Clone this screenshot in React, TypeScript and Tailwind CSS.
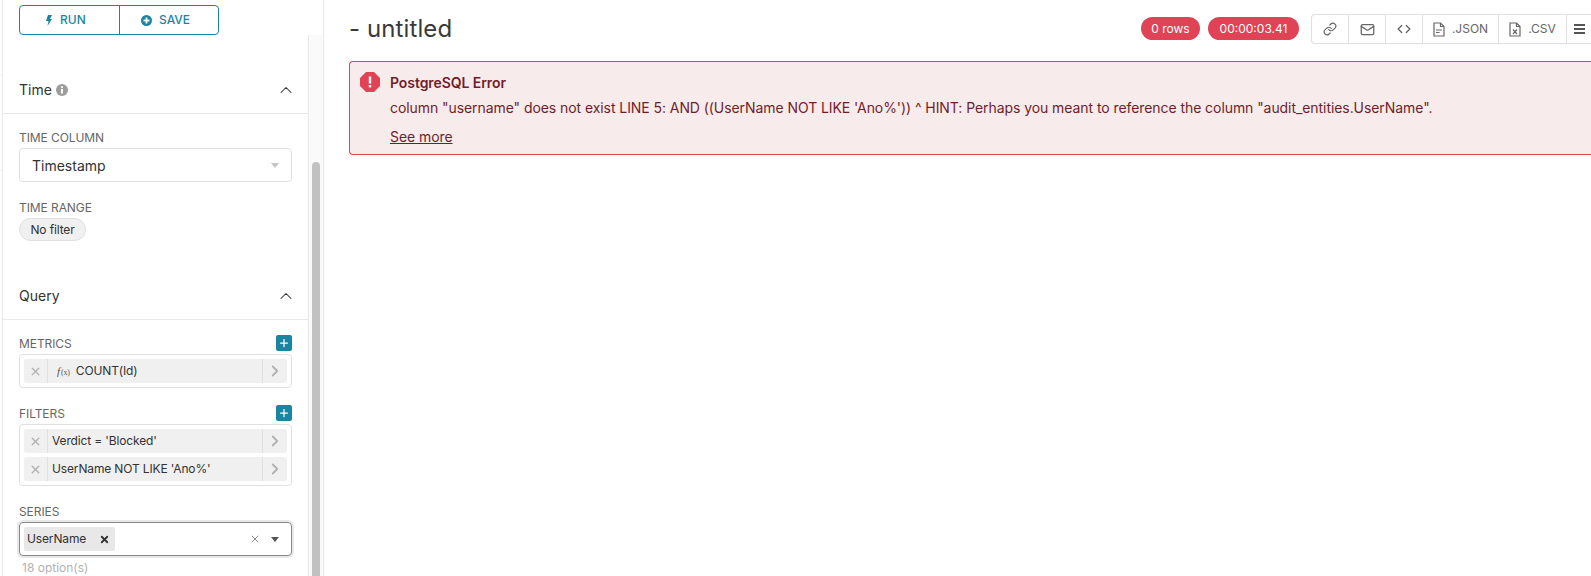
import type { ReactNode } from "react";
import { ChevronUp, ChevronRight, X, Plus, Link, Mail, Code } from "lucide-react";

function InfoDot() {
  return (
    <svg width="12" height="12" viewBox="0 0 12 12">
      <circle cx="6" cy="6" r="6" fill="#9c9c9c" />
      <rect x="5" y="5" width="2" height="4.5" fill="#fff" />
      <rect x="5" y="2.3" width="2" height="1.8" fill="#fff" />
    </svg>
  );
}

function Section({ title, info, children }: { title: string; info?: boolean; children: ReactNode }) {
  return (
    <div>
      <div className="h-[48px] flex items-center justify-between pl-[16px] pr-[12px] border-b border-[#e8e8e8] text-[14px] text-[#323232]">
        <span className="flex items-center gap-[4px]">
          {title}
          {info && <InfoDot />}
        </span>
        <ChevronUp size={20} strokeWidth={1.25} className="text-[#323232]" />
      </div>
      {children}
    </div>
  );
}

function Label({ children }: { children: ReactNode }) {
  return <div className="text-[12px] leading-[16px] text-[#666] tracking-[-0.08px]">{children}</div>;
}

function Pill({ children }: { children: ReactNode }) {
  return (
    <div className="h-[24px] bg-[#f0f0f0] rounded-[2px] flex items-center text-[12px] text-[#323232] tracking-[-0.14px]">
      <div className="w-[24px] h-full flex items-center justify-center border-r border-[#e0e0e0]">
        <X size={13} strokeWidth={2.5} className="text-[#b2b2b2]" />
      </div>
      <div className="flex-1 flex items-center pl-[4px] whitespace-nowrap">{children}</div>
      <div className="w-[25px] h-full flex items-center justify-center border-l border-[#e0e0e0]">
        <ChevronRight size={18} strokeWidth={2.5} className="text-[#b2b2b2]" />
      </div>
    </div>
  );
}

function AddBtn() {
  return (
    <div className="w-[16px] h-[16px] rounded-[2px] bg-[#1a85a0] flex items-center justify-center">
      <Plus size={12} strokeWidth={2.5} className="text-white" />
    </div>
  );
}

function ToolBtn({ children, className = "" }: { children: ReactNode; className?: string }) {
  return (
    <div className={"h-full flex items-center justify-center border-r border-[#e0e0e0] text-[12px] text-[#666] " + className}>
      {children}
    </div>
  );
}

function JsonIcon() {
  return (
    <svg width="12" height="15" viewBox="0 0 12 15" fill="none" stroke="#666" strokeWidth="1.2" className="mr-[7px]">
      <path d="M1 1H7.5L11 4.5V14H1Z" />
      <path d="M7.5 1V4.5H11" />
      <path d="M3 8H9M3 10.5H6.5" strokeWidth="1.1" />
    </svg>
  );
}

function CsvIcon() {
  return (
    <svg width="12" height="15" viewBox="0 0 12 15" fill="none" stroke="#666" strokeWidth="1.2" className="mr-[7px]">
      <path d="M1 1H7.5L11 4.5V14H1Z" />
      <path d="M7.5 1V4.5H11" />
      <path d="M4 7.5L8 12M8 7.5L4 12" strokeWidth="1.2" />
    </svg>
  );
}

function MenuIcon() {
  return (
    <svg width="11" height="10" viewBox="0 0 11 10" fill="#555">
      <rect x="0" y="0" width="11" height="2" />
      <rect x="0" y="4" width="11" height="2" />
      <rect x="0" y="8" width="11" height="2" />
    </svg>
  );
}

export default function App() {
  return (
    <div className="w-[1591px] h-[576px] overflow-hidden bg-white flex font-['Inter','Liberation_Sans',sans-serif]">
      <div className="w-[2px] shrink-0 flex flex-col">
        <div className="h-[76px] border-b border-[#eeeeee]" />
        <div className="h-[95px] border-b border-[#f2f2f2]" />
      </div>
      <aside className="w-[322px] h-full shrink-0 border-l border-r border-[#e8e8e8] flex flex-col">
        <div className="h-[35px] shrink-0 pl-[16px] pt-[5px]">
          <div className="w-[200px] h-[30px] border border-[#1a85a0] rounded-[4px] flex text-[#1a85a0] text-[12px] font-medium">
            <div className="w-[100px] border-r border-[#1a85a0] flex items-center pl-[26px] gap-[8px]">
              <svg width="6" height="11" viewBox="0 0 6 11" fill="#1a85a0">
                <polygon points="2,0 6,0 4,4 6,4 1.5,11 2.5,6 0,6" />
              </svg>
              RUN
            </div>
            <div className="flex-1 flex items-center pl-[21px] gap-[7px]">
              <svg width="11" height="11" viewBox="0 0 11 11">
                <circle cx="5.5" cy="5.5" r="5.5" fill="#1a85a0" />
                <rect x="2.5" y="4.6" width="6" height="1.8" fill="#fff" />
                <rect x="4.6" y="2.5" width="1.8" height="6" fill="#fff" />
              </svg>
              SAVE
            </div>
          </div>
        </div>
        <div className="flex-1 flex min-h-0">
          <div className="w-[305px] shrink-0">
            <div className="pt-[31px]">
              <Section title="Time" info>
                <div className="px-[16px] pt-[16px]">
                  <Label>TIME COLUMN</Label>
                  <div className="mt-[2px] h-[34px] border border-[#e0e0e0] rounded-[4px] flex items-center justify-between px-[12px] text-[14px] text-[#323232]">
                    Timestamp
                    <span className="w-0 h-0 border-l-[4px] border-r-[4px] border-t-[5px] border-l-transparent border-r-transparent border-t-[#c4c4c4]" />
                  </div>
                  <div className="mt-[18px]"><Label>TIME RANGE</Label></div>
                  <div className="mt-[2px] w-[67px] h-[23px] rounded-full bg-[#f0f0f0] border border-[#e0e0e0] flex items-center justify-center text-[12px] text-[#323232] tracking-[-0.14px]">
                    No filter
                  </div>
                </div>
              </Section>
              <div className="mt-[31px]">
                <Section title="Query">
                  <div className="px-[16px] pt-[15px]">
                    <div className="flex items-end justify-between h-[16px]">
                      <div className="translate-y-[1px]"><Label>METRICS</Label></div>
                      <AddBtn />
                    </div>
                    <div className="mt-[3px] border border-[#e0e0e0] rounded-[4px] p-[4px] flex flex-col gap-[4px]">
                      <Pill>
                        <span className="ml-[5px] mr-[6px] flex items-baseline text-[#555] font-['Liberation_Serif',serif] italic">
                          <span className="text-[11px]">f</span>
                          <span className="text-[8px] not-italic ml-[1px]">(x)</span>
                        </span>
                        COUNT(Id)
                      </Pill>
                    </div>
                    <div className="mt-[17px] flex items-end justify-between h-[16px]">
                      <div className="translate-y-[1px]"><Label>FILTERS</Label></div>
                      <AddBtn />
                    </div>
                    <div className="mt-[3px] border border-[#e0e0e0] rounded-[4px] p-[4px] flex flex-col gap-[4px]">
                      <Pill>Verdict = 'Blocked'</Pill>
                      <Pill>UserName NOT LIKE 'Ano%'</Pill>
                    </div>
                    <div className="mt-[18px]"><Label>SERIES</Label></div>
                    <div className="mt-[2px] h-[34px] border border-[#8a8a8a] rounded-[4px] shadow-[0_0_0_2px_#e8e8e8] flex items-center pl-[4px] pr-[12px]">
                      <div className="w-[91px] h-[24px] bg-[#e8e8e8] rounded-[2px] flex items-center justify-between pl-[3px] pr-[5px] text-[12px] text-[#323232] tracking-[-0.14px]">
                        UserName
                        <X size={11} strokeWidth={4} className="text-[#323232]" />
                      </div>
                      <X size={12} strokeWidth={1.5} className="ml-auto text-[#666]" />
                      <span className="ml-[10px] w-0 h-0 border-l-[4px] border-r-[4px] border-t-[5px] border-l-transparent border-r-transparent border-t-[#555]" />
                    </div>
                    <div className="mt-[4px] pl-[3px] text-[12px] leading-[16px] text-[#b2b2b2]">18 option(s)</div>
                  </div>
                </Section>
              </div>
            </div>
          </div>
          <div className="w-[15px] shrink-0 bg-[#fafafa] border-l border-[#e8e8e8] pt-[127px] flex justify-center">
            <div className="w-[8px] h-full bg-[#c1c1c1] rounded-t-[4px]" />
          </div>
        </div>
      </aside>
      <main className="flex-1 min-w-0 pl-[25px] overflow-hidden">
        <div className="h-[61px] flex items-start justify-between">
          <div className="mt-[14px] text-[24px] leading-[30px] text-[#3a3a3a] whitespace-nowrap tracking-[0.1px]">- untitled</div>
          <div className="flex items-start shrink-0 mt-[14px]">
            <div className="mt-[3px] h-[23px] w-[59px] rounded-full bg-[#e04355] text-white text-[12px] flex items-center justify-center">0 rows</div>
            <div className="mt-[3px] ml-[8px] h-[23px] w-[91px] rounded-full bg-[#e04355] text-white text-[12px] flex items-center justify-center">00:00:03.41</div>
            <div className="ml-[12px] h-[30px] w-[280px] border border-[#e0e0e0] border-r-0 rounded-l-[4px] flex">
              <ToolBtn className="w-[37px]"><Link size={14} strokeWidth={2} /></ToolBtn>
              <ToolBtn className="w-[37px]"><Mail size={15} strokeWidth={2} /></ToolBtn>
              <ToolBtn className="w-[37px]"><Code size={14} strokeWidth={2.25} /></ToolBtn>
              <ToolBtn className="w-[76px]"><JsonIcon />.JSON</ToolBtn>
              <ToolBtn className="w-[68px]"><CsvIcon />.CSV</ToolBtn>
              <ToolBtn className="w-[24px] border-r-0"><MenuIcon /></ToolBtn>
            </div>
          </div>
        </div>
        <div className="h-[94px] border border-[#e04355] border-r-0 rounded-l-[4px] bg-[#f8ebec] flex pl-[10px] pt-[10px] text-[#711d2a] tracking-[-0.07px]">
          <svg width="20" height="20" viewBox="0 0 20 20" className="shrink-0">
            <polygon points="6,0 14,0 20,6 20,14 14,20 6,20 0,14 0,6" fill="#e04355" />
            <rect x="8.8" y="4.5" width="2.4" height="7" fill="#fff" />
            <rect x="8.8" y="13" width="2.4" height="2.4" fill="#fff" />
          </svg>
          <div className="ml-[10px] text-[14px]">
            <div className="font-semibold leading-[22px]">PostgreSQL Error</div>
            <div className="mt-[3px] leading-[22px] whitespace-nowrap">column "username" does not exist LINE 5: AND ((UserName NOT LIKE 'Ano%')) ^ HINT: Perhaps you meant to reference the column "audit_entities.UserName".</div>
            <div className="mt-[8px] leading-[20px] underline">See more</div>
          </div>
        </div>
      </main>
    </div>
  );
}
